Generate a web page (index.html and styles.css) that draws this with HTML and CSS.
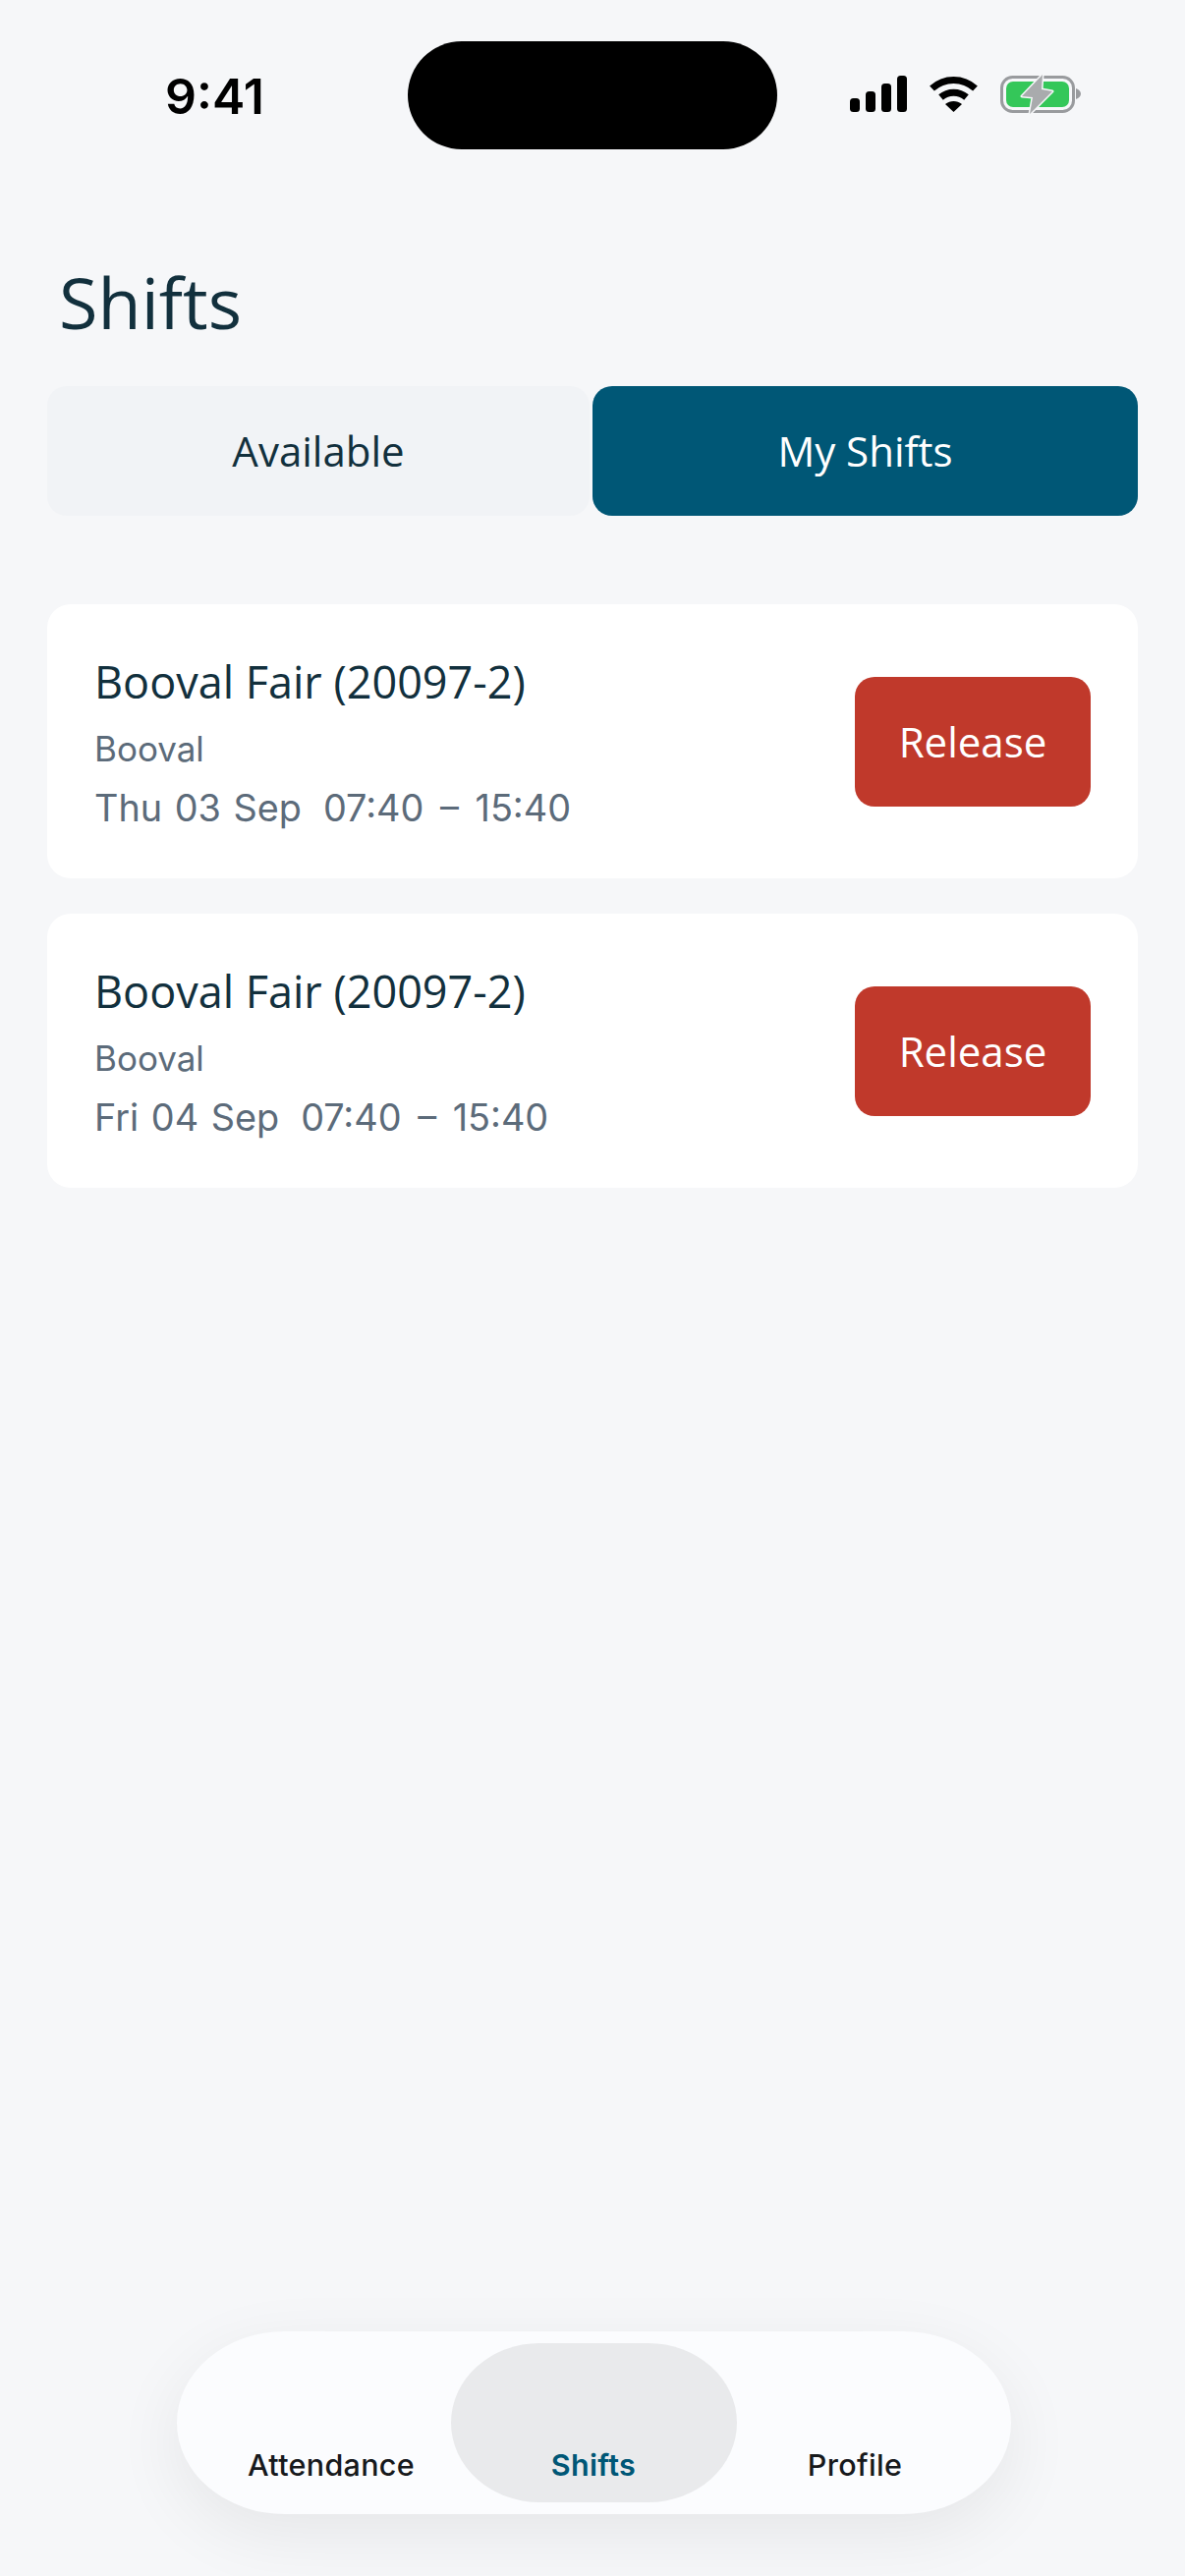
FILE: index.html
```html
<!DOCTYPE html>
<html lang="en">
<head>
  <meta charset="UTF-8" />
  <meta name="viewport" content="width=device-width, initial-scale=1.0"/>
  <title>Shifts</title>
  <link rel="stylesheet" href="styles.css">
</head>
<body>
  <div class="status-bar">
    <div class="status-time">9:41</div>
    <div class="island"></div>
    <div class="status-icons">
      <svg class="icon-signal" width="58" height="37" viewBox="0 0 58 37">
        <rect x="0" y="23" width="10" height="14" rx="3.5"/>
        <rect x="16" y="16" width="10" height="21" rx="3.5"/>
        <rect x="32" y="8" width="10" height="29" rx="3.5"/>
        <rect x="48" y="0" width="10" height="37" rx="3.5"/>
      </svg>
      <svg class="icon-wifi" width="51" height="37" viewBox="0 0 51 37">
        <path d="M3.5 13C16 1.5 35 1.5 47.5 13" fill="none" stroke="#000" stroke-width="7"/>
        <path d="M12.5 22C20 15.5 31 15.5 38.5 22" fill="none" stroke="#000" stroke-width="7"/>
        <path d="M25.5 37L17 29C22 25 29 25 34 29Z"/>
      </svg>
      <svg class="icon-battery" width="82" height="42" viewBox="0 0 82 42">
        <rect x="1.5" y="3.5" width="73" height="35" rx="11" fill="none" stroke="#999b9e" stroke-width="3"/>
        <rect x="6" y="8" width="64" height="26" rx="7" fill="#34c759"/>
        <path d="M77 15C80 16 82 18 82 20.500C82 23 80 25 77 26Z" fill="#999b9e"/>
        <path d="M43 1L22 23L33 24L30 41L53 18L42 16Z" fill="#a9abad" stroke="#f6f7f9" stroke-width="3" stroke-linejoin="round" paint-order="stroke"/>
      </svg>
    </div>
  </div>

  <h1 class="page-title">Shifts</h1>

  <div class="tabs">
    <div class="tab">Available</div>
    <div class="tab tab-active">My Shifts</div>
  </div>

  <div class="shift-list">
    <div class="shift-card">
      <div class="shift-info">
        <div class="shift-name">Booval Fair (20097-2)</div>
        <div class="shift-place">Booval</div>
        <div class="shift-time"><span>Thu 03 Sep</span><span class="shift-hours">07:40 – 15:40</span></div>
      </div>
      <button class="btn-release">Release</button>
    </div>
    <div class="shift-card">
      <div class="shift-info">
        <div class="shift-name">Booval Fair (20097-2)</div>
        <div class="shift-place">Booval</div>
        <div class="shift-time"><span>Fri 04 Sep</span><span class="shift-hours">07:40 – 15:40</span></div>
      </div>
      <button class="btn-release">Release</button>
    </div>
  </div>

  <nav class="bottom-nav">
    <div class="nav-item nav-attendance">Attendance</div>
    <div class="nav-item nav-shifts">Shifts</div>
    <div class="nav-item nav-profile">Profile</div>
  </nav>
</body>
</html>
```

FILE: styles.css
```css
* {
  box-sizing: border-box;
  margin: 0;
  padding: 0;
}

html, body {
  height: 2622px;
  overflow: hidden;
}

body {
  background-color: #f6f7f9;
  font-family: 'Open Sans', sans-serif;
  display: flex;
  flex-direction: column;
  padding: 42px 48px 63px;
}

.status-bar {
  display: flex;
  align-items: center;
  height: 110px;
}

.status-time {
  width: 367px;
  padding-left: 120px;
  font-family: 'Inter', sans-serif;
  font-size: 50px;
  font-weight: 600;
  line-height: 50px;
  color: #000;
  margin-top: 1px;
}

.island {
  width: 376px;
  height: 110px;
  background-color: #000;
  border-radius: 55px;
}

.status-icons {
  display: flex;
  align-items: center;
  gap: 22px;
  margin-left: 74px;
  margin-top: -3px;
}

.status-icons svg {
  display: block;
}

.page-title {
  font-size: 72px;
  font-weight: 400;
  line-height: 98px;
  color: #12303d;
  margin-top: 106px;
  padding-left: 12px;
}

.tabs {
  display: flex;
  gap: 3px;
  margin-top: 37px;
}

.tab {
  width: 552px;
  height: 132px;
  display: flex;
  align-items: center;
  justify-content: center;
  background-color: #f1f3f6;
  border-radius: 20px;
  font-size: 42px;
  color: #12303d;
  padding-bottom: 2px;
}

.tab-active {
  width: 555px;
  background-color: #005776;
  color: #fff;
}

.shift-list {
  display: flex;
  flex-direction: column;
  gap: 36px;
  margin-top: 90px;
}

.shift-card {
  height: 279px;
  background-color: #fff;
  border-radius: 24px;
  display: flex;
  align-items: center;
  justify-content: space-between;
  padding: 0 48px 0 48px;
}

.shift-name {
  font-size: 45px;
  line-height: 58px;
  color: #12303d;
}

.shift-place {
  font-family: 'Inter', sans-serif;
  font-size: 35px;
  line-height: 44px;
  color: #5c6b7a;
  margin-top: 17px;
}

.shift-time {
  font-family: 'Inter', sans-serif;
  font-size: 37.8px;
  word-spacing: 2px;
  line-height: 46px;
  color: #5c6b7a;
  margin-top: 15px;
}

.shift-hours {
  margin-left: 22px;
  word-spacing: 6px;
}

.btn-release {
  width: 240px;
  height: 132px;
  border: none;
  border-radius: 20px;
  background-color: #c0392b;
  color: #fff;
  font-family: 'Open Sans', sans-serif;
  font-size: 42px;
}

.bottom-nav {
  margin-top: auto;
  align-self: center;
  width: 849px;
  height: 186px;
  margin-left: 2px;
  background-color: #fbfcfe;
  border-radius: 110px / 93px;
  box-shadow: 0 20px 70px rgba(0, 0, 0, 0.07);
  display: flex;
  align-items: center;
  font-family: 'Inter', sans-serif;
}

.nav-item {
  display: flex;
  align-items: flex-end;
  justify-content: center;
  font-size: 30.5px;
  letter-spacing: 0.3px;
  font-weight: 500;
  line-height: 36px;
  color: #17191c;
  padding-bottom: 20px;
  height: 162px;
}

.nav-attendance {
  width: 279px;
  padding-left: 36px;
}

.nav-shifts {
  width: 291px;
  background-color: #e9eaec;
  border-radius: 90px / 81px;
  color: #005776;
  font-weight: 600;
}

.nav-profile {
  width: 279px;
  padding-right: 38px;
}
```
